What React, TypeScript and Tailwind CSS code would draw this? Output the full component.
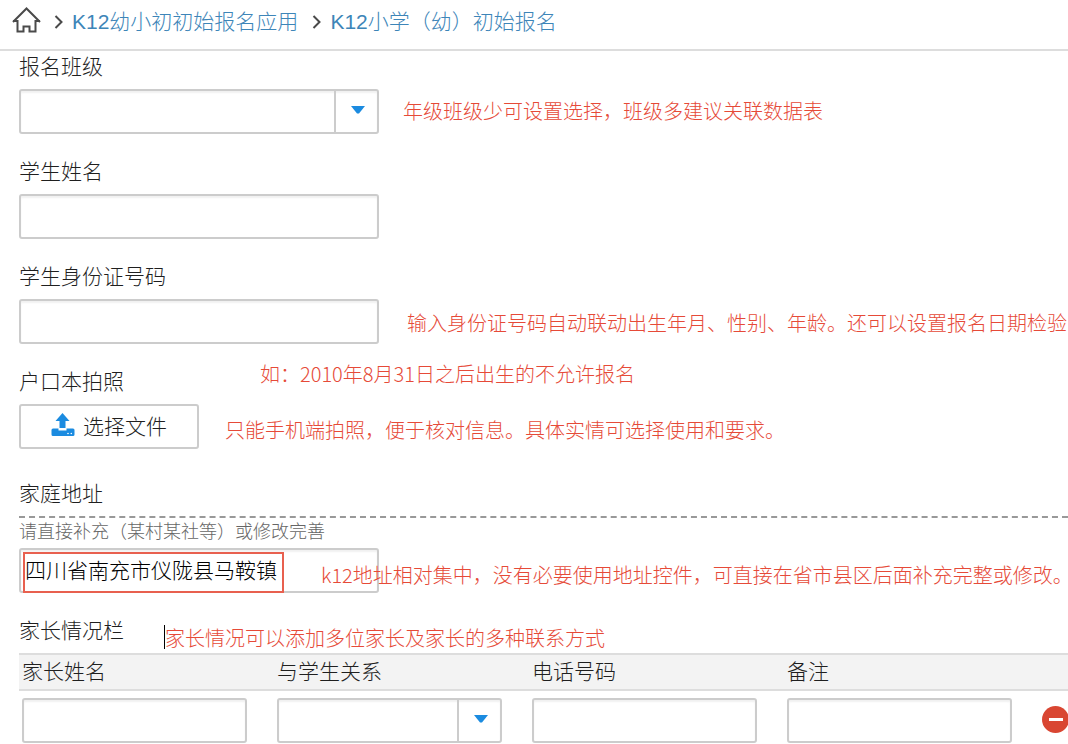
import type { ReactNode } from "react";

const fieldClass =
  "block h-[45px] w-full rounded-[3px] border-2 border-[#cccccc] bg-white px-1 pb-[3px] text-[21px] text-black shadow-[inset_0_2px_2px_rgba(0,0,0,0.06)] outline-none focus:border-[#66afe9]";

const HomeIcon = () => (
  <svg
    width="30"
    height="26"
    viewBox="0 0 30 26"
    fill="none"
    stroke="#4a4a4a"
    strokeWidth="2"
  >
    <path d="M1 15 L14.5 1.5 L28 15" />
    <path d="M1 14 H5.5 V24.5 H11.5 V19.5 H17.5 V24.5 H23.5 V14 H28" />
  </svg>
);

const Chevron = () => (
  <svg
    className="shrink-0"
    width="10"
    height="16"
    viewBox="0 0 10 16"
    fill="none"
    stroke="#4a4a4a"
    strokeWidth="2"
  >
    <path d="M1.5 2 L7.5 8 L1.5 14" />
  </svg>
);

const UploadIcon = () => (
  <svg className="mb-1" width="24" height="24" viewBox="0 0 24 24" fill="#1b8be0">
    <path d="M11.5 0 L18.5 8 H14.5 V15 H8.5 V8 H4.5 Z" />
    <path d="M2 15.5 H7.5 V17.5 H15.5 V15.5 H22 Q23.5 15.5 23.5 17 V21.5 Q23.5 23 22 23 H2 Q0.5 23 0.5 21.5 V17 Q0.5 15.5 2 15.5 Z" />
    <circle cx="17" cy="20.5" r="0.8" fill="#fff" />
    <circle cx="20.3" cy="20.5" r="0.8" fill="#fff" />
  </svg>
);

const Note = ({
  children,
  className = "",
}: {
  children: ReactNode;
  className?: string;
}) => (
  <p className={`whitespace-nowrap text-[20px] text-[#e64a38] ${className}`}>
    {children}
  </p>
);

const Label = ({ id, children }: { id: string; children: ReactNode }) => (
  <label htmlFor={id} className="block text-[21px] leading-7">
    {children}
  </label>
);

const SelectBox = ({ id, label }: { id: string; label?: string }) => (
  <div className="relative w-full">
    <select id={id} aria-label={label} className={`${fieldClass} appearance-none`}>
      <option value=""></option>
    </select>
    <span className="pointer-events-none absolute inset-y-0 right-0 flex w-[45px] items-center justify-center border-l-2 border-[#cccccc] pb-[3px]">
      <svg width="14" height="8" viewBox="0 0 14 8" fill="#1b8be0">
        <path d="M0 0 H14 L8 7.5 H6 Z" />
      </svg>
    </span>
  </div>
);

const Breadcrumb = () => (
  <nav className="flex h-[51px] items-center border-b-2 border-[#dddddd] pb-[6px] pl-3 text-[21px] text-[#3d85b8]">
    <a href="#home" aria-label="首页" className="mr-3 mb-1">
      <HomeIcon />
    </a>
    <Chevron />
    <a href="#app" className="mr-3.5 ml-2 whitespace-nowrap">
      K12幼小初初始报名应用
    </a>
    <Chevron />
    <a href="#form" className="ml-2 whitespace-nowrap">
      K12小学（幼）初始报名
    </a>
  </nav>
);

const ParentTable = () => (
  <table className="w-full table-fixed border-collapse">
    <colgroup>
      <col className="w-[255px]" />
      <col className="w-[255px]" />
      <col className="w-[255px]" />
      <col className="w-[255px]" />
      <col />
    </colgroup>
    <thead>
      <tr className="h-9 border-y-2 border-[#dddddd] bg-[#f3f3f3] text-left text-[21px] leading-7">
        <th className="p-0 pl-[3px] font-light">家长姓名</th>
        <th className="p-0 pl-[3px] font-light">与学生关系</th>
        <th className="p-0 pl-[3px] font-light">电话号码</th>
        <th className="p-0 pl-[3px] font-light">备注</th>
        <th className="p-0"></th>
      </tr>
    </thead>
    <tbody>
      <tr>
        <td className="pt-[7px] pr-[27px] pl-[3px]">
          <input type="text" aria-label="家长姓名" className={fieldClass} />
        </td>
        <td className="pt-[7px] pr-[27px] pl-[3px]">
          <SelectBox id="relation" label="与学生关系" />
        </td>
        <td className="pt-[7px] pr-[27px] pl-[3px]">
          <input type="tel" aria-label="电话号码" className={fieldClass} />
        </td>
        <td className="pt-[7px] pr-[27px] pl-[3px]">
          <input type="text" aria-label="备注" className={fieldClass} />
        </td>
        <td className="pt-1 pl-[3px]">
          <button
            type="button"
            aria-label="删除"
            className="flex size-[27px] items-center justify-center rounded-full bg-[#d94632]"
          >
            <span className="h-[3px] w-[14px] bg-white"></span>
          </button>
        </td>
      </tr>
    </tbody>
  </table>
);

const App = () => {
  return (
    <div className="overflow-hidden bg-white font-['Liberation_Sans','Noto_Sans_CJK_SC',sans-serif] font-light text-[#1f1f1f]">
      <Breadcrumb />
      <form className="pt-[2px] pl-[19px]">
        <div className="mb-6 space-y-2">
          <Label id="grade">报名班级</Label>
          <div className="flex items-center gap-6">
            <div className="w-[360px] shrink-0">
              <SelectBox id="grade" />
            </div>
            <Note>年级班级少可设置选择，班级多建议关联数据表</Note>
          </div>
        </div>

        <div className="mb-6 space-y-2">
          <Label id="student">学生姓名</Label>
          <div className="w-[360px]">
            <input id="student" type="text" className={fieldClass} />
          </div>
        </div>

        <div className="mb-4 space-y-2">
          <Label id="idcard">学生身份证号码</Label>
          <div className="flex items-end gap-7">
            <div className="w-[360px] shrink-0">
              <input id="idcard" type="text" className={fieldClass} />
            </div>
            <Note className="leading-10">
              输入身份证号码自动联动出生年月、性别、年龄。还可以设置报名日期检验
            </Note>
          </div>
        </div>

        <div className="mb-[31px] space-y-2">
          <div className="flex h-9 gap-[136px]">
            <div className="self-end">
              <Label id="upload">户口本拍照</Label>
            </div>
            <Note className="font-['Noto_Sans_CJK_SC',sans-serif] leading-7">
              如：2010年8月31日之后出生的不允许报名
            </Note>
          </div>
          <div className="flex items-end gap-[26px]">
            <button
              id="upload"
              type="button"
              className="flex h-[45px] w-[180px] shrink-0 items-center justify-center gap-2 rounded-[3px] border-2 border-[#cccccc] text-[21px]"
            >
              <UploadIcon />
              选择文件
            </button>
            <Note className="leading-9">
              只能手机端拍照，便于核对信息。具体实情可选择使用和要求。
            </Note>
          </div>
        </div>

        <div className="mb-6">
          <Label id="address">家庭地址</Label>
          <p className="mt-2 mb-1 border-t-2 border-dashed border-[#999999] pt-[2px] text-[18px] leading-6 text-[#666666]">
            请直接补充（某村某社等）或修改完善
          </p>
          <div className="relative w-[360px]">
            <input
              id="address"
              type="text"
              defaultValue="四川省南充市仪陇县马鞍镇"
              className={fieldClass}
            />
            <span className="pointer-events-none absolute top-1 bottom-0 left-1 w-[261px] border-2 border-[#e8604f]"></span>
            <Note className="pointer-events-none absolute bottom-0 left-[302px] font-['Noto_Sans_CJK_SC',sans-serif] leading-9">
              k12地址相对集中，没有必要使用地址控件，可直接在省市县区后面补充完整或修改
              <span className="[font-feature-settings:'halt']">。</span>
            </Note>
          </div>
        </div>

        <div className="flex h-9 gap-10">
          <h2 className="text-[21px] leading-7">家长情况栏</h2>
          <div className="flex self-end">
            <span className="h-6 w-px bg-black"></span>
            <Note className="leading-7">
              家长情况可以添加多位家长及家长的多种联系方式
            </Note>
          </div>
        </div>
        <ParentTable />
      </form>
    </div>
  );
};

export default App;
